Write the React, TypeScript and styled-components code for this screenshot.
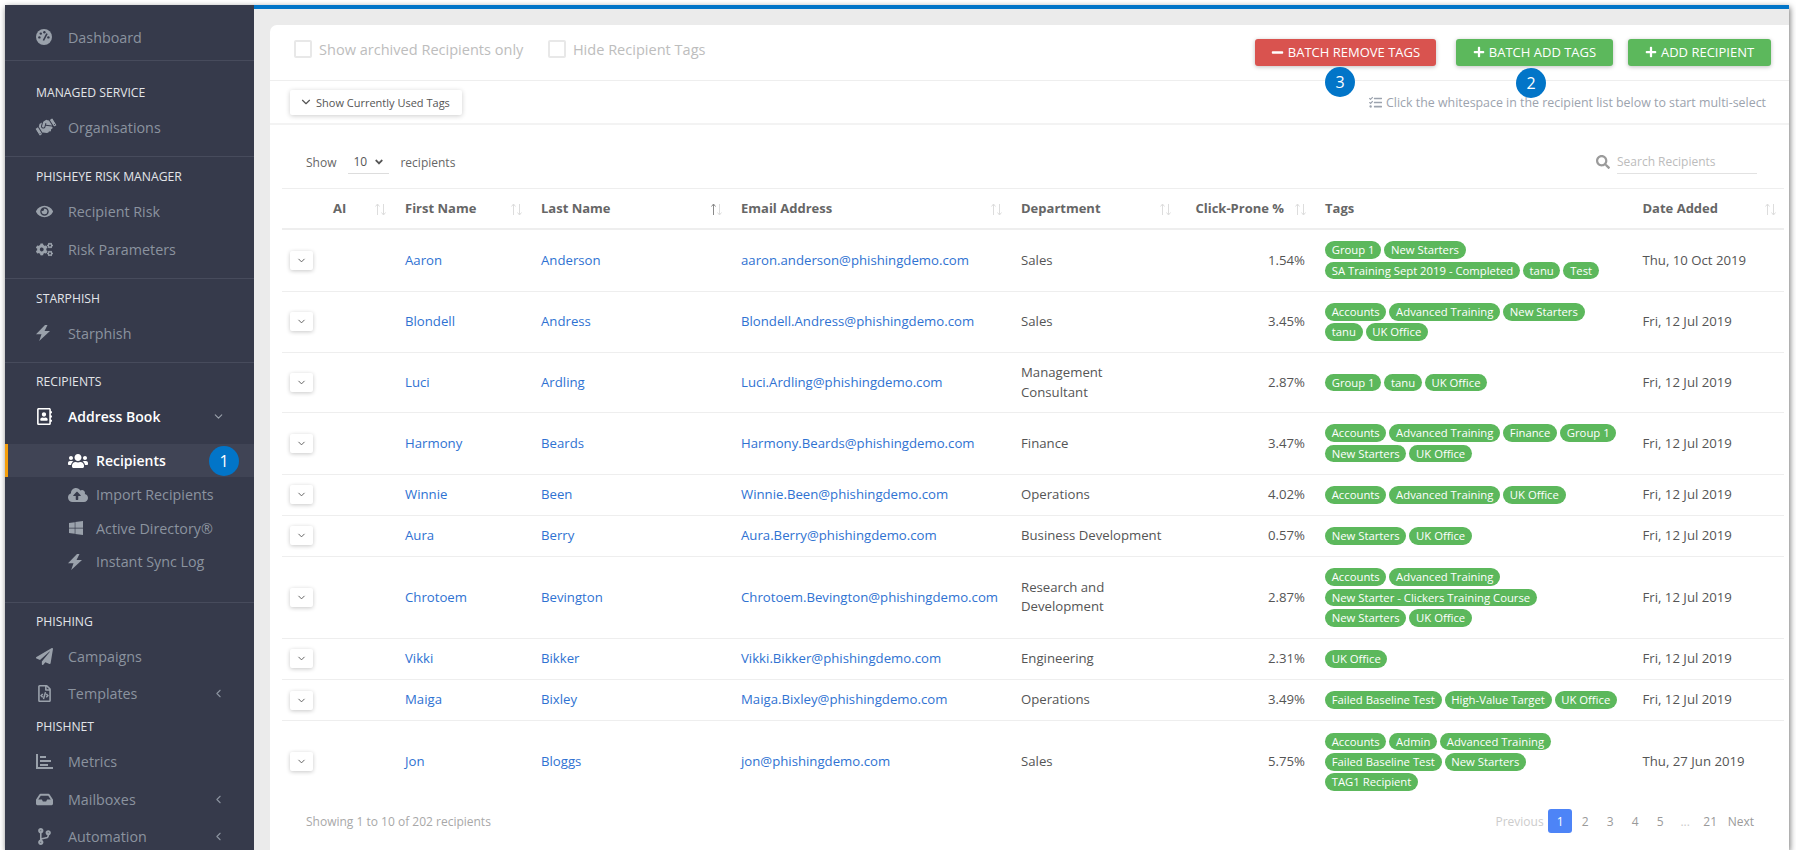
import React from "react";
import styled, { createGlobalStyle } from "styled-components";
import { ChevronDown, ChevronLeft } from "lucide-react";
import {
  FaAngleDown,
  FaCloudUploadAlt,
  FaCodeBranch,
  FaCogs,
  FaEye,
  FaHandshake,
  FaInbox,
  FaMinus,
  FaPaperPlane,
  FaPlus,
  FaRegAddressBook,
  FaRegFileCode,
  FaSearch,
  FaTasks,
  FaUsers,
  FaWindows,
} from "react-icons/fa";

const GlobalStyle = createGlobalStyle`
  html, body {
    margin: 0;
    background: #fff;
    font-family: "Open Sans", "Noto Sans", sans-serif;
  }
  * {
    box-sizing: border-box;
  }
`;

const Frame = styled.div`
  width: 1784px;
  height: 845px;
  margin: 5px 0 0 5px;
  display: flex;
  overflow: hidden;
  box-shadow: 1px 2px 6px rgba(0, 0, 0, 0.55);
`;

const Sidebar = styled.nav`
  width: 249px;
  flex: none;
  background: #363a4b;
  overflow: hidden;
`;

const Section = styled.div<{ $top: number; $bottom: number; $last?: boolean }>`
  padding: ${(p) => p.$top}px 0 ${(p) => p.$bottom}px;
  border-bottom: ${(p) => (p.$last ? "none" : "1px solid #474b5c")};
`;

const Heading = styled.div<{ $gap?: number }>`
  height: 16px;
  line-height: 16px;
  margin: ${(p) => p.$gap ?? 0}px 0 8px 31px;
  font-size: 12.2px;
  font-weight: 500;
  color: #e3e5e9;
`;

const Item = styled.div<{ $active?: boolean }>`
  height: 37.5px;
  display: flex;
  align-items: center;
  padding: 0 29px 0 31px;
  font-size: ${(p) => (p.$active ? 14 : 14.3)}px;
  color: ${(p) => (p.$active ? "#fff" : "#8b939f")};
  font-weight: ${(p) => (p.$active ? 600 : 400)};
`;

const ItemIcon = styled.span<{ $active?: boolean }>`
  width: 32px;
  flex: none;
  display: flex;
  align-items: center;
  font-size: 17px;
  color: ${(p) => (p.$active ? "#fff" : "#9aa1ab")};
`;

const TiltedIcon = styled(FaHandshake)`
  font-size: 20px;
  transform: rotate(-32deg);
`;

const ItemLabel = styled.span`
  flex: 1;
`;

const SubItem = styled.div<{ $active?: boolean }>`
  position: relative;
  height: ${(p) => (p.$active ? 33 : 33.5)}px;
  margin-top: ${(p) => (p.$active ? 8.5 : 0)}px;
  margin-bottom: ${(p) => (p.$active ? 1 : 0)}px;
  display: flex;
  align-items: center;
  padding-left: ${(p) => (p.$active ? 60 : 63)}px;
  border-left: ${(p) => (p.$active ? "3px solid #f59e0b" : "none")};
  background: ${(p) => (p.$active ? "#404455" : "transparent")};
  font-size: ${(p) => (p.$active ? 14 : 14.3)}px;
  font-weight: ${(p) => (p.$active ? 600 : 400)};
  color: ${(p) => (p.$active ? "#fff" : "#8b939f")};
`;

const SubIcon = styled.span<{ $active?: boolean }>`
  width: 28px;
  flex: none;
  display: flex;
  align-items: center;
  font-size: 20px;
  color: ${(p) => (p.$active ? "#fff" : "#9aa1ab")};
`;

const Badge = styled.span<{ $left?: number; $top?: number; $right?: number }>`
  position: absolute;
  left: ${(p) => (p.$left !== undefined ? `${p.$left}px` : "auto")};
  right: ${(p) => (p.$right !== undefined ? `${p.$right}px` : "auto")};
  top: ${(p) => p.$top ?? 0}px;
  width: 30px;
  height: 30px;
  border-radius: 50%;
  background: #0275c8;
  color: #fff;
  font-size: 16px;
  font-weight: 400;
  display: flex;
  align-items: center;
  justify-content: center;
  z-index: 2;
`;

const Main = styled.main`
  flex: 1;
  min-width: 0;
  border-top: 4px solid #0275c8;
  background: #ebebeb;
  padding: 16px 0 0 16px;
  display: flex;
`;

const Card = styled.div`
  flex: 1;
  min-width: 0;
  background: #fff;
  border-radius: 7px 0 0 0;
  display: flex;
  flex-direction: column;
`;

const TopBar = styled.div`
  height: 56px;
  flex: none;
  display: flex;
  align-items: center;
  padding: 0 18px 0 24px;
  border-bottom: 1px solid #eeeeee;
`;

const CheckLabel = styled.label`
  display: flex;
  align-items: center;
  gap: 7px;
  margin: -7px 24.5px 0 0;
  font-size: 14.55px;
  color: #bdbdbd;
`;

const CheckBox = styled.span`
  width: 18px;
  height: 18px;
  border: 2px solid #e8e8e8;
  border-radius: 2px;
`;

const Actions = styled.div`
  margin-left: auto;
  display: flex;
  margin-top: -1px;
`;

const ActionButton = styled.button<{ $color: string; $width: number; $gap?: number }>`
  position: relative;
  width: ${(p) => p.$width}px;
  height: 27px;
  margin-left: ${(p) => p.$gap ?? 0}px;
  border: none;
  border-radius: 3px;
  background: ${(p) => p.$color};
  color: #fff;
  font-family: inherit;
  font-size: 13px;
  font-weight: 500;
  display: flex;
  align-items: center;
  justify-content: center;
  gap: 4px;
  padding: 0;
  box-shadow: 0 1px 4px rgba(0, 0, 0, 0.25);
`;

const TagBar = styled.div`
  height: 44px;
  flex: none;
  display: flex;
  align-items: center;
  justify-content: space-between;
  padding: 0 23px 0 20px;
  border-bottom: 2px solid #f3f3f3;
`;

const TagToggle = styled.button`
  width: 172px;
  height: 25px;
  border: none;
  border-radius: 2px;
  background: #fff;
  color: #555;
  font-family: inherit;
  font-size: 11px;
  display: flex;
  align-items: center;
  gap: 3px;
  padding: 0 0 0 9px;
  box-shadow: 0 1px 5px rgba(0, 0, 0, 0.2);
`;

const Hint = styled.div`
  display: flex;
  align-items: center;
  gap: 4px;
  font-size: 12.4px;
  color: #9ca3ae;
`;

const TableArea = styled.div`
  flex: 1;
  min-height: 0;
  padding: 0 5px 0 12px;
  display: flex;
  flex-direction: column;
`;

const Controls = styled.div`
  height: 63px;
  flex: none;
  padding: 11px 27px 0 24px;
  display: flex;
  align-items: center;
  justify-content: space-between;
  font-size: 12px;
  color: #666;
`;

const LengthGroup = styled.div`
  display: flex;
  align-items: center;
`;

const LengthSelect = styled.span`
  width: 41px;
  height: 23px;
  margin: 0 11px 0 12px;
  padding: 0 4px 0 5px;
  display: flex;
  align-items: center;
  justify-content: space-between;
  border-bottom: 1px solid #ddd;
  color: #555;
`;

const SearchGroup = styled.div`
  display: flex;
  align-items: center;
  gap: 7px;
  color: #9b9b9b;
  font-size: 14px;
`;

const SearchInput = styled.div`
  width: 140px;
  height: 24px;
  line-height: 23px;
  font-size: 12px;
  color: #bcbcbc;
  border-bottom: 1px solid #e2e2e2;
`;

const COLUMNS = "51px 72px 136px 200px 280px 169px 135px 317.5px 141.5px";

const HeadRow = styled.div`
  display: grid;
  grid-template-columns: ${COLUMNS};
  height: 42px;
  padding-bottom: 1px;
  flex: none;
  align-items: center;
  border-top: 1px solid #eeeeee;
  border-bottom: 2px solid #eeeeee;
`;

const HeadCell = styled.div<{ $pad?: number }>`
  display: flex;
  align-items: center;
  justify-content: space-between;
  padding-right: ${(p) => p.$pad ?? 18}px;
  font-size: 13px;
  font-weight: 700;
  color: #666;
`;

const ProneLabel = styled.span`
  margin: 0 10px 0 auto;
`;

const SortIcon = styled.svg`
  width: 13px;
  height: 13px;
  margin-top: 2px;
  flex: none;
`;

const Row = styled.div<{ $last?: boolean }>`
  display: grid;
  grid-template-columns: ${COLUMNS};
  align-items: center;
  padding: 10px 0;
  min-height: 41px;
  border-bottom: ${(p) => (p.$last ? "none" : "1px solid #eeeeee")};
  font-size: 13.2px;
  line-height: 19.5px;
  color: #555;
`;

const Expander = styled.button`
  width: 23px;
  height: 19px;
  margin-left: 8px;
  border: none;
  border-radius: 2px;
  background: #fff;
  color: #555;
  padding: 0;
  display: flex;
  align-items: center;
  justify-content: center;
  box-shadow: 0 1px 4px rgba(0, 0, 0, 0.22);
`;

const RowLink = styled.a`
  color: #2f72d2;
  text-decoration: none;
`;

const DeptCell = styled.div`
  padding-right: 22px;
`;

const PercentCell = styled.div`
  text-align: right;
  padding-right: 20px;
`;

const TagList = styled.div`
  display: flex;
  flex-wrap: wrap;
  padding-right: 25px;
  column-gap: 3px;
`;

const Tag = styled.span`
  height: 17.75px;
  line-height: 17.75px;
  margin: 1.25px 0;
  padding: 0 6.7px;
  border-radius: 9px;
  background: #5cb85c;
  color: #fff;
  font-size: 11.3px;
  font-weight: 500;
  white-space: nowrap;
`;

const Footer = styled.div`
  flex: 1;
  display: flex;
  align-items: center;
  justify-content: space-between;
  padding: 0 30px 10px 24px;
  font-size: 12px;
  color: #a8a8a8;
`;

const Pager = styled.div`
  display: flex;
  align-items: center;
`;

const PageButton = styled.span<{ $active?: boolean; $dim?: boolean }>`
  width: 25px;
  height: 24px;
  display: flex;
  align-items: center;
  justify-content: center;
  border-radius: 3px;
  margin: ${(p) => (p.$active ? "0 0.5px" : "0")};
  ${(p) => (p.$active ? "width: 24px;" : "")}
  background: ${(p) => (p.$active ? "#4d84f7" : "transparent")};
  color: ${(p) => (p.$active ? "#fff" : p.$dim ? "#cccccc" : "#9a9a9a")};
`;

const PagerWord = styled.span<{ $dim?: boolean }>`
  margin: ${(p) => (p.$dim ? "0 4px 0 0" : "0 0 0 5px")};
  color: ${(p) => (p.$dim ? "#cccccc" : "#9a9a9a")};
`;

const GaugeIcon = () => (
  <svg width="16" height="16" viewBox="0 0 16 16">
    <circle cx="8" cy="8" r="8" fill="currentColor" />
    <g fill="#363a4b">
      <circle cx="3.4" cy="8.4" r="1.2" />
      <circle cx="4.8" cy="4.6" r="1.2" />
      <circle cx="8.4" cy="3.2" r="1.2" />
      <circle cx="12.4" cy="8.4" r="1.2" />
    </g>
    <path d="M7.4 11.5L11 4.6" stroke="#363a4b" strokeWidth="1.6" />
  </svg>
);

const BoltIcon = () => (
  <svg width="14" height="16" viewBox="0 0 14 16" fill="currentColor">
    <path d="M9 0H11.5L8.5 6H14L3.2 16L5.5 9.2H0Z" />
  </svg>
);

const BarsIcon = () => (
  <svg width="17" height="15" viewBox="0 0 17 15" fill="currentColor">
    <rect x="0" y="0" width="2" height="15" />
    <rect x="0" y="13" width="17" height="2" />
    <rect x="4" y="2" width="6" height="2" />
    <rect x="4" y="6" width="11" height="2" />
    <rect x="4" y="10" width="8" height="2" />
  </svg>
);

const Sort = ({ up }: { up?: boolean }) => (
  <SortIcon viewBox="0 0 13 13" fill="none" strokeWidth="1">
    <path
      d="M3.5 12V1M1.5 3.5L3.5 1L5.5 3.5"
      stroke={up ? "#8a8a8a" : "#dddddd"}
    />
    <path d="M9.5 1V12M7.5 9.5L9.5 12L11.5 9.5" stroke="#dddddd" />
  </SortIcon>
);

type Recipient = {
  first: string;
  last: string;
  email: string;
  dept: string;
  click: string;
  tags: string[];
  date: string;
};

const recipients: Recipient[] = [
  {
    first: "Aaron",
    last: "Anderson",
    email: "aaron.anderson@phishingdemo.com",
    dept: "Sales",
    click: "1.54%",
    tags: ["Group 1", "New Starters", "SA Training Sept 2019 - Completed", "tanu", "Test"],
    date: "Thu, 10 Oct 2019",
  },
  {
    first: "Blondell",
    last: "Andress",
    email: "Blondell.Andress@phishingdemo.com",
    dept: "Sales",
    click: "3.45%",
    tags: ["Accounts", "Advanced Training", "New Starters", "tanu", "UK Office"],
    date: "Fri, 12 Jul 2019",
  },
  {
    first: "Luci",
    last: "Ardling",
    email: "Luci.Ardling@phishingdemo.com",
    dept: "Management Consultant",
    click: "2.87%",
    tags: ["Group 1", "tanu", "UK Office"],
    date: "Fri, 12 Jul 2019",
  },
  {
    first: "Harmony",
    last: "Beards",
    email: "Harmony.Beards@phishingdemo.com",
    dept: "Finance",
    click: "3.47%",
    tags: ["Accounts", "Advanced Training", "Finance", "Group 1", "New Starters", "UK Office"],
    date: "Fri, 12 Jul 2019",
  },
  {
    first: "Winnie",
    last: "Been",
    email: "Winnie.Been@phishingdemo.com",
    dept: "Operations",
    click: "4.02%",
    tags: ["Accounts", "Advanced Training", "UK Office"],
    date: "Fri, 12 Jul 2019",
  },
  {
    first: "Aura",
    last: "Berry",
    email: "Aura.Berry@phishingdemo.com",
    dept: "Business Development",
    click: "0.57%",
    tags: ["New Starters", "UK Office"],
    date: "Fri, 12 Jul 2019",
  },
  {
    first: "Chrotoem",
    last: "Bevington",
    email: "Chrotoem.Bevington@phishingdemo.com",
    dept: "Research and Development",
    click: "2.87%",
    tags: ["Accounts", "Advanced Training", "New Starter - Clickers Training Course", "New Starters", "UK Office"],
    date: "Fri, 12 Jul 2019",
  },
  {
    first: "Vikki",
    last: "Bikker",
    email: "Vikki.Bikker@phishingdemo.com",
    dept: "Engineering",
    click: "2.31%",
    tags: ["UK Office"],
    date: "Fri, 12 Jul 2019",
  },
  {
    first: "Maiga",
    last: "Bixley",
    email: "Maiga.Bixley@phishingdemo.com",
    dept: "Operations",
    click: "3.49%",
    tags: ["Failed Baseline Test", "High-Value Target", "UK Office"],
    date: "Fri, 12 Jul 2019",
  },
  {
    first: "Jon",
    last: "Bloggs",
    email: "jon@phishingdemo.com",
    dept: "Sales",
    click: "5.75%",
    tags: ["Accounts", "Admin", "Advanced Training", "Failed Baseline Test", "New Starters", "TAG1 Recipient"],
    date: "Thu, 27 Jun 2019",
  },
];

const App = () => {
  return (
    <>
      <GlobalStyle />
      <Frame>
        <Sidebar>
          <Section $top={13.5} $bottom={3.5}>
            <Item>
              <ItemIcon><GaugeIcon /></ItemIcon>
              <ItemLabel>Dashboard</ItemLabel>
            </Item>
          </Section>
          <Section $top={24} $bottom={10}>
            <Heading>MANAGED SERVICE</Heading>
            <Item>
              <ItemIcon><TiltedIcon /></ItemIcon>
              <ItemLabel>Organisations</ItemLabel>
            </Item>
          </Section>
          <Section $top={12} $bottom={9.5}>
            <Heading>PHISHEYE RISK MANAGER</Heading>
            <Item>
              <ItemIcon><FaEye /></ItemIcon>
              <ItemLabel>Recipient Risk</ItemLabel>
            </Item>
            <Item>
              <ItemIcon><FaCogs /></ItemIcon>
              <ItemLabel>Risk Parameters</ItemLabel>
            </Item>
          </Section>
          <Section $top={12} $bottom={10}>
            <Heading>STARPHISH</Heading>
            <Item>
              <ItemIcon><BoltIcon /></ItemIcon>
              <ItemLabel>Starphish</ItemLabel>
            </Item>
          </Section>
          <Section $top={11} $bottom={23}>
            <Heading>RECIPIENTS</Heading>
            <Item $active>
              <ItemIcon $active><FaRegAddressBook /></ItemIcon>
              <ItemLabel>Address Book</ItemLabel>
              <ChevronDown size={13} color="#9aa1ab" />
            </Item>
            <SubItem $active>
              <SubIcon $active><FaUsers /></SubIcon>
              Recipients
              <Badge $right={15} $top={1.5}>1</Badge>
            </SubItem>
            <SubItem>
              <SubIcon><FaCloudUploadAlt /></SubIcon>
              Import Recipients
            </SubItem>
            <SubItem>
              <SubIcon><FaWindows size={16} /></SubIcon>
              Active Directory®
            </SubItem>
            <SubItem>
              <SubIcon><BoltIcon /></SubIcon>
              Instant Sync Log
            </SubItem>
          </Section>
          <Section $top={11} $bottom={0} $last>
            <Heading>PHISHING</Heading>
            <Item>
              <ItemIcon><FaPaperPlane /></ItemIcon>
              <ItemLabel>Campaigns</ItemLabel>
            </Item>
            <Item>
              <ItemIcon><FaRegFileCode /></ItemIcon>
              <ItemLabel>Templates</ItemLabel>
              <ChevronLeft size={13} />
            </Item>
            <Heading $gap={6.5}>PHISHNET</Heading>
            <Item>
              <ItemIcon><BarsIcon /></ItemIcon>
              <ItemLabel>Metrics</ItemLabel>
            </Item>
            <Item>
              <ItemIcon><FaInbox /></ItemIcon>
              <ItemLabel>Mailboxes</ItemLabel>
              <ChevronLeft size={13} />
            </Item>
            <Item>
              <ItemIcon><FaCodeBranch /></ItemIcon>
              <ItemLabel>Automation</ItemLabel>
              <ChevronLeft size={13} />
            </Item>
          </Section>
        </Sidebar>
        <Main>
          <Card>
            <TopBar>
              <CheckLabel><CheckBox />Show archived Recipients only</CheckLabel>
              <CheckLabel><CheckBox />Hide Recipient Tags</CheckLabel>
              <Actions>
                <ActionButton $color="#d9534f" $width={181}>
                  <FaMinus size={13} /> BATCH REMOVE TAGS
                  <Badge $left={70} $top={28}>3</Badge>
                </ActionButton>
                <ActionButton $color="#5cb85c" $width={157} $gap={20}>
                  <FaPlus size={12} /> BATCH ADD TAGS
                  <Badge $left={60} $top={29}>2</Badge>
                </ActionButton>
                <ActionButton $color="#5cb85c" $width={143} $gap={15}>
                  <FaPlus size={12} /> ADD RECIPIENT
                </ActionButton>
              </Actions>
            </TopBar>
            <TagBar>
              <TagToggle><ChevronDown size={14} /> Show Currently Used Tags</TagToggle>
              <Hint><FaTasks size={13} /> Click the whitespace in the recipient list below to start multi-select</Hint>
            </TagBar>
            <TableArea>
              <Controls>
                <LengthGroup>
                  Show
                  <LengthSelect>10 <FaAngleDown size={12} /></LengthSelect>
                  recipients
                </LengthGroup>
                <SearchGroup>
                  <FaSearch size={14} />
                  <SearchInput>Search Recipients</SearchInput>
                </SearchGroup>
              </Controls>
              <HeadRow>
                <div />
                <HeadCell>AI<Sort /></HeadCell>
                <HeadCell>First Name<Sort /></HeadCell>
                <HeadCell>Last Name<Sort up /></HeadCell>
                <HeadCell>Email Address<Sort /></HeadCell>
                <HeadCell>Department<Sort /></HeadCell>
                <HeadCell>
                  <ProneLabel>Click-Prone %</ProneLabel>
                  <Sort />
                </HeadCell>
                <HeadCell>Tags</HeadCell>
                <HeadCell $pad={7}>Date Added<Sort /></HeadCell>
              </HeadRow>
              {recipients.map((r, i) => (
                <Row key={r.email} $last={i === recipients.length - 1}>
                  <Expander><ChevronDown size={11} /></Expander>
                  <div />
                  <RowLink>{r.first}</RowLink>
                  <RowLink>{r.last}</RowLink>
                  <RowLink>{r.email}</RowLink>
                  <DeptCell>{r.dept}</DeptCell>
                  <PercentCell>{r.click}</PercentCell>
                  <TagList>
                    {r.tags.map((t) => (
                      <Tag key={t}>{t}</Tag>
                    ))}
                  </TagList>
                  <div>{r.date}</div>
                </Row>
              ))}
              <Footer>
                <span>Showing 1 to 10 of 202 recipients</span>
                <Pager>
                  <PagerWord $dim>Previous</PagerWord>
                  <PageButton $active>1</PageButton>
                  <PageButton>2</PageButton>
                  <PageButton>3</PageButton>
                  <PageButton>4</PageButton>
                  <PageButton>5</PageButton>
                  <PageButton $dim>...</PageButton>
                  <PageButton>21</PageButton>
                  <PagerWord>Next</PagerWord>
                </Pager>
              </Footer>
            </TableArea>
          </Card>
        </Main>
      </Frame>
    </>
  );
};

export default App;
